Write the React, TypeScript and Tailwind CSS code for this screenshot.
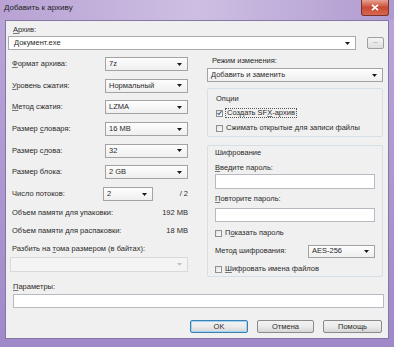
import React from "react";
import clsx from "clsx";

const Arrow = ({ color = "#1a1a1a" }: { color?: string }) => (
  <svg width="5" height="3" viewBox="0 0 5 3" className="shrink-0">
    <path d="M0 0h5L2.5 3z" fill={color} />
  </svg>
);

type ComboProps = {
  value?: string;
  className?: string;
  disabled?: boolean;
  edit?: boolean;
};

const Combo = ({ value, className, disabled, edit }: ComboProps) => (
  <div
    className={clsx(
      "flex items-center justify-between border pl-[3px] pr-[5px]",
      disabled
        ? "border-[#d9d9d9] bg-[#f4f4f4]"
        : edit
          ? "border-[#a7abb0] bg-white"
          : "border-[#a3a3a3] bg-gradient-to-b from-[#fdfdfd] to-[#efefef]",
      className
    )}
  >
    <span>{value}</span>
    <Arrow color={disabled ? "#c4c4c4" : "#1a1a1a"} />
  </div>
);

const Input = ({ className }: { className?: string }) => (
  <div className={clsx("border border-[#b7bac0] bg-white", className)} />
);

const Check = ({ checked }: { checked?: boolean }) => (
  <div className="flex h-[7px] w-[7px] shrink-0 items-center justify-center border border-[#8f8f8f] bg-gradient-to-br from-[#e2e2e2] to-[#fbfbfb]">
    {checked && (
      <svg width="6" height="6" viewBox="0 0 6 6">
        <path d="M0.6 3.2 2.3 4.8 5.4 0.8" stroke="#3a5f98" strokeWidth="1.3" fill="none" />
      </svg>
    )}
  </div>
);

const Btn = ({ label, def }: { label: string; def?: boolean }) => (
  <div
    className={clsx(
      "flex h-[13px] items-center justify-center rounded-[2px] border bg-gradient-to-b from-[#f3f3f3] via-[#ebebeb] to-[#d6d6d6]",
      def ? "border-[#3c7fb1] shadow-[inset_0_0_0_1px_#9fd4f2]" : "border-[#8a8a8a]"
    )}
  >
    {label}
  </div>
);

const Row = ({ label, children }: { label: React.ReactNode; children: React.ReactNode }) => (
  <div className="flex h-[14px] items-center justify-between">
    <span className="pl-[2px]">{label}</span>
    {children}
  </div>
);

const U = ({ children }: { children: React.ReactNode }) => (
  <span className="underline decoration-[#777] underline-offset-1">{children}</span>
);

export default function App() {
  return (
    <div
      className="flex h-[347px] w-[394px] flex-col bg-gradient-to-b from-[#bba7d9] to-[#9f89c8] text-[7.5px] leading-[10px] text-[#2a2a2a]"
      style={{ fontFamily: '"Liberation Sans", Arial, sans-serif' }}
    >
      {/* title bar */}
      <div className="flex h-[20px] shrink-0 items-start justify-between bg-gradient-to-r from-[#b8a2d4] via-[#cdbfe2] to-[#b09bd0] pl-[4px] pr-[5px]">
        <span className="mt-[3px] text-[8px] text-[#222]">Добавить к архиву</span>
        <div className="flex h-[16px] w-[28px] items-center justify-center rounded-b-[3px] border border-t-0 border-[#7b3228] bg-gradient-to-b from-[#e7a192] via-[#c64a34] to-[#d7684f]">
          <svg width="8" height="7" viewBox="0 0 8 7">
            <path d="M1 0.8 7 6.2M7 0.8 1 6.2" stroke="#fff" strokeWidth="1.6" />
          </svg>
        </div>
      </div>

      {/* client area */}
      <div className="mx-[5px] mb-[8px] flex flex-1 flex-col border border-[#8676a6] bg-[#f0f0f0] px-[2px] pt-[4px]">
        <span className="pl-[5px]">
          <U>А</U>рхив:
        </span>
        <div className="mt-[1px] flex items-center gap-[11px]">
          <Combo edit value="Документ.exe" className="h-[14px] w-[348px] pl-[5px]" />
          <div className="flex h-[12px] w-[17px] items-start justify-center rounded-[2px] border border-[#a0a0a0] bg-gradient-to-b from-[#f4f4f4] to-[#dedede] text-[6px] leading-[6px]">
            ...
          </div>
        </div>

        <div className="mt-[6px] flex items-start justify-between">
          {/* left column */}
          <div className="ml-[2px] flex w-[178px] flex-col pt-[1px]">
            <div className="flex flex-col gap-[7.7px]">
              <Row label={<><U>Ф</U>ормат архива:</>}>
                <Combo value="7z" className="h-[14px] w-[83px]" />
              </Row>
              <Row label={<><U>У</U>ровень сжатия:</>}>
                <Combo value="Нормальный" className="h-[14px] w-[83px]" />
              </Row>
              <Row label={<><U>М</U>етод сжатия:</>}>
                <Combo value="LZMA" className="h-[14px] w-[83px]" />
              </Row>
              <Row label={<>Размер <U>с</U>ловаря:</>}>
                <Combo value="16 MB" className="h-[14px] w-[83px]" />
              </Row>
              <Row label={<>Размер с<U>л</U>ова:</>}>
                <Combo value="32" className="h-[14px] w-[83px]" />
              </Row>
              <Row label={<>Размер блока:</>}>
                <Combo value="2 GB" className="h-[14px] w-[83px]" />
              </Row>
              <div className="flex h-[14px] items-center">
                <span className="w-[93px] pl-[2px]">Число потоков:</span>
                <Combo value="2" className="h-[14px] w-[50px]" />
                <span className="ml-auto">/ 2</span>
              </div>
            </div>
            <div className="mt-[7px] flex justify-between pl-[2px]">
              <span>Объем памяти для упаковки:</span>
              <span>192 MB</span>
            </div>
            <div className="mt-[8px] flex justify-between pl-[2px]">
              <span>Объем памяти для распаковки:</span>
              <span>18 MB</span>
            </div>
            <span className="mt-[8px] pl-[2px]">
              Разбить на <U>т</U>ома размером (в байтах):
            </span>
            <Combo disabled className="mt-[3px] h-[15px] w-[178px]" />
          </div>

          {/* right column */}
          <div className="mr-[3px] flex w-[176px] flex-col">
            <span className="pl-[5px]">Режим изменения:</span>
            <Combo value="Добавить и заменить" className="mt-[2px] h-[14px] w-[176px]" />

            <div className="mt-[6px] flex h-[49px] flex-col rounded-[2px] border border-[#d5dfe5] px-[8px] pt-[5px]">
              <span>Опции</span>
              <div className="mt-[4px] flex h-[10px] items-center gap-[2px]">
                <Check checked />
                <span className="border border-dotted border-[#555] px-[1px] leading-[8px]">
                  Создать SF<U>X</U>-архив
                </span>
              </div>
              <div className="mt-[5px] flex h-[10px] items-center gap-[3px]">
                <Check />
                <span>Сжимать открытые для записи файлы</span>
              </div>
            </div>

            <div className="mt-[8px] flex h-[132px] flex-col rounded-[2px] border border-[#d5dfe5] px-[7px] pt-[2px]">
              <span>Шифрование</span>
              <span className="mt-[5px]">
                <U>В</U>ведите пароль:
              </span>
              <Input className="mt-[1px] h-[15px]" />
              <span className="mt-[5px]">
                <U>П</U>овторите пароль:
              </span>
              <Input className="mt-[4px] h-[14px]" />
              <div className="mt-[6px] flex h-[10px] items-center gap-[3px]">
                <Check />
                <span>
                  П<U>о</U>казать пароль
                </span>
              </div>
              <div className="mt-[6px] flex h-[14px] items-center justify-between">
                <span>Метод шифрования:</span>
                <Combo value="AES-256" className="h-[13px] w-[67px]" />
              </div>
              <div className="mt-[6px] flex h-[10px] items-center gap-[3px]">
                <Check />
                <span>
                  <U>Ш</U>ифровать имена файлов
                </span>
              </div>
            </div>
          </div>
        </div>

        <span className="mt-[5px] pl-[5px]">
          <U>П</U>араметры:
        </span>
        <Input className="ml-[5px] mt-[2px] h-[14px] w-[371px]" />

        <div className="mt-[12px] flex justify-end gap-[9px] pr-[4px]">
          <div className="w-[58px]">
            <Btn label="OK" def />
          </div>
          <div className="w-[57px]">
            <Btn label="Отмена" />
          </div>
          <div className="w-[59px]">
            <Btn label="Помощь" />
          </div>
        </div>
      </div>
    </div>
  );
}
